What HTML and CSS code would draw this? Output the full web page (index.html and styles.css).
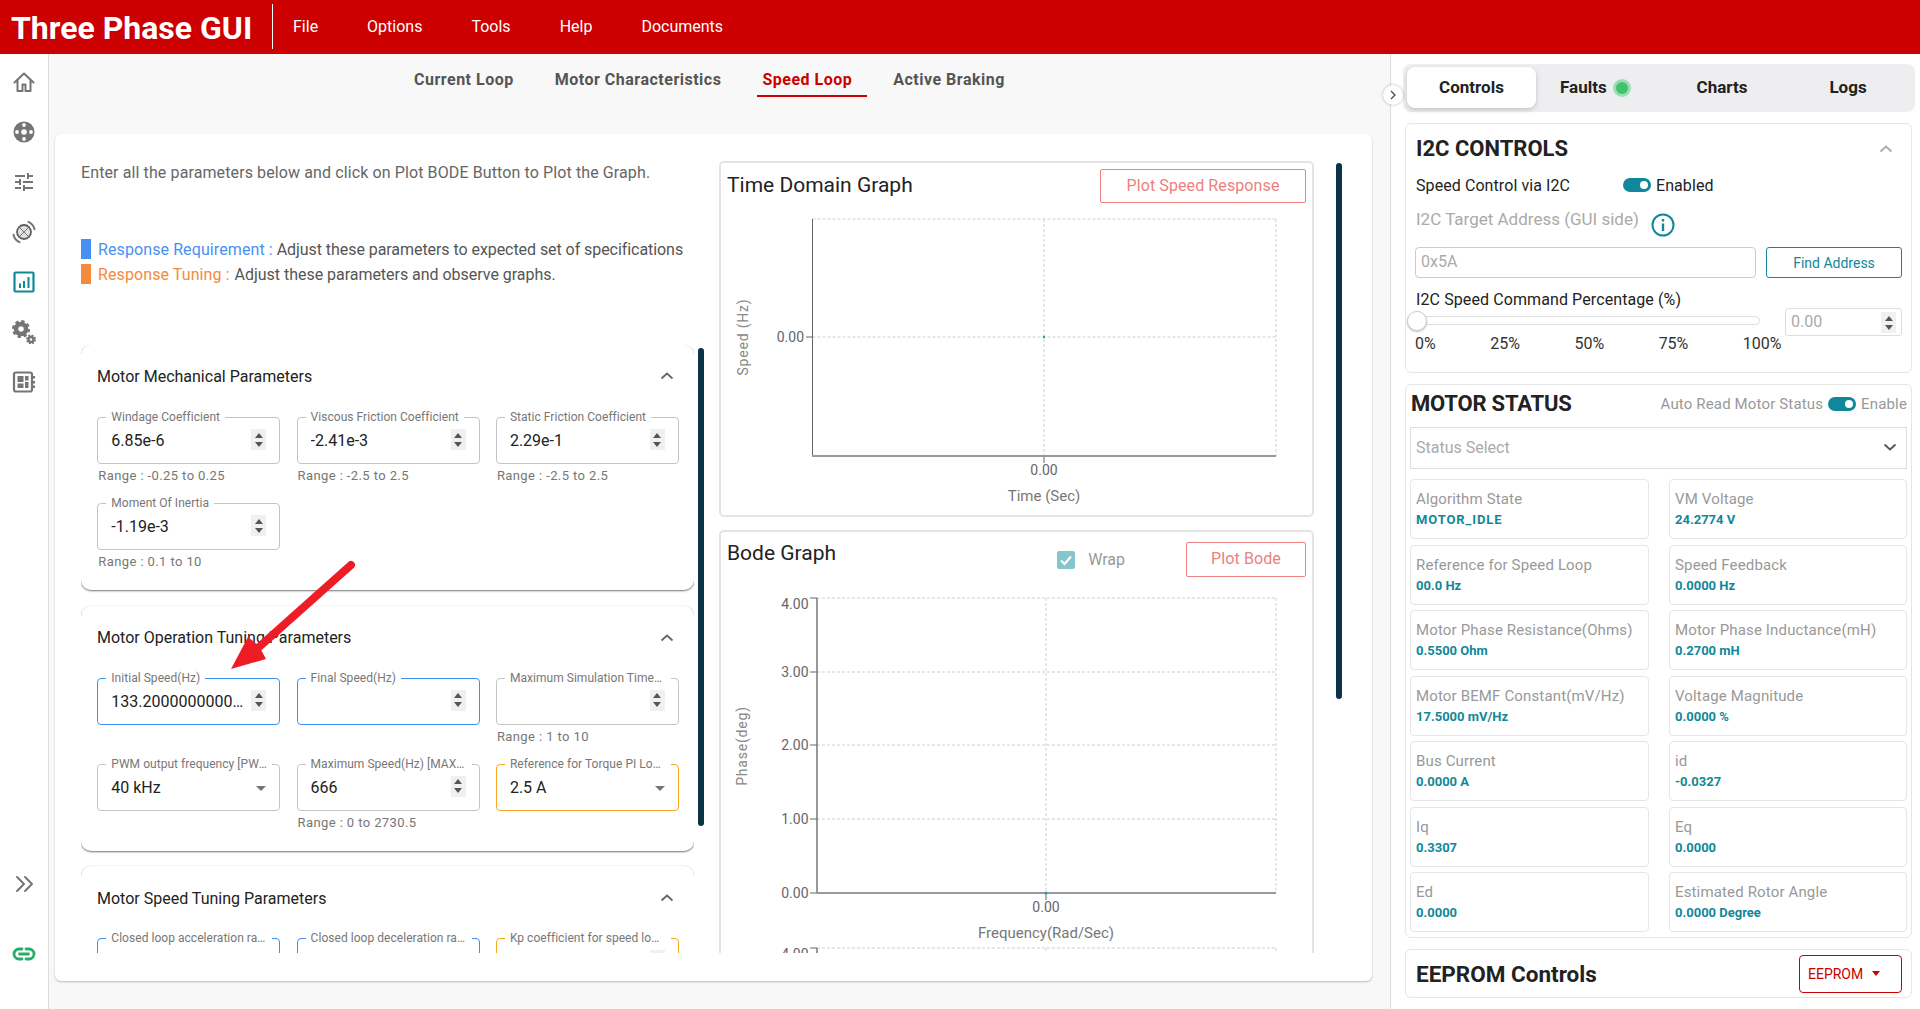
FILE: index.html
```html
<!DOCTYPE html>
<html lang="en">
<head>
<meta charset="utf-8">
<title>Three Phase GUI</title>
<link rel="stylesheet" href="styles.css">
</head>
<body>
<header class="topbar">
  <div class="brand">Three Phase GUI</div>
  <div class="brand-rule"></div>
  <nav class="menu">
    <span>File</span><span>Options</span><span>Tools</span><span>Help</span><span>Documents</span>
  </nav>
</header>
<div class="shell">
  <aside class="rail">
    <div class="rail-top">
      <svg class="rail-icon" viewBox="0 0 24 24"><path class="ln" d="M2.500 12.500 12 3.500l9.500 9M5.500 10.500V21h5v-6.500h3V21h5V10.500"/></svg>
      <svg class="rail-icon" viewBox="0 0 24 24"><circle class="fl" cx="12" cy="12" r="10.500"/><circle class="hole" cx="12" cy="12" r="2.800"/><circle class="hole" cx="12" cy="5" r="1.900"/><circle class="hole" cx="12" cy="19" r="1.900"/><circle class="hole" cx="5" cy="12" r="1.900"/><circle class="hole" cx="19" cy="12" r="1.900"/></svg>
      <svg class="rail-icon" viewBox="0 0 24 24"><path class="fl" d="M3 17v2h6v-2H3zM3 5v2h10V5H3zm10 16v-2h8v-2h-8v-2h-2v6h2zM7 9v2H3v2h4v2h2V9H7zm14 4v-2H11v2h10zm-6-4h2V7h4V5h-4V3h-2v6z"/></svg>
      <svg class="rail-icon" viewBox="0 0 24 24"><circle cx="12" cy="12" r="7" fill="#e2e2e2" stroke="#616161" stroke-width="1.800"/><path class="ln thin" d="M7 7l10 10M17 7 7 17"/><path class="ln" d="M16.500 1.800a11 11 0 0 1 6 7.500M7.500 22.200a11 11 0 0 1-6-7.500"/></svg>
      <svg class="rail-icon" viewBox="0 0 24 24"><rect x="2.500" y="2.500" width="19" height="19" rx="1" fill="none" stroke="#118899" stroke-width="2.200"/><path fill="#118899" d="M7 13.500h2V18H7zM11 11h2v7h-2zM15.500 7h2v11h-2z"/></svg>
      <svg class="rail-icon" viewBox="0 0 24 24"><circle cx="9" cy="9" r="5" fill="none" stroke="#757575" stroke-width="4.500"/><circle cx="9" cy="9" r="7.500" fill="none" stroke="#757575" stroke-width="3" stroke-dasharray="3.200 2.700"/><circle cx="19" cy="19.500" r="2.500" fill="none" stroke="#757575" stroke-width="2.500"/><circle cx="19" cy="19.500" r="4.200" fill="none" stroke="#757575" stroke-width="1.600" stroke-dasharray="1.900 1.400"/></svg>
      <svg class="rail-icon" viewBox="0 0 24 24"><rect x="2" y="2.500" width="18" height="19" rx="2" fill="none" stroke="#757575" stroke-width="2.200"/><path class="fl" d="M5.500 6h6v6h-6zM5.500 13.500h6V18h-6zM13 6h3.500v4.500H13zM13 12h3.500v6H13zM21 6h2v2.500h-2zM21 11h2v2.500h-2zM21 15.500h2V18h-2z"/></svg>
    </div>
    <div class="rail-bottom">
      <svg class="rail-icon" viewBox="0 0 24 24"><path class="ln" d="M5 5l7 7-7 7M13 5l7 7-7 7"/></svg>
      <svg class="rail-icon" viewBox="0 0 24 24"><path fill="none" stroke="#27ae6b" stroke-width="2.800" stroke-linecap="round" d="M10 7H7a5 5 0 0 0 0 10h3M14 7h3a5 5 0 0 1 0 10h-3M7.500 12h9"/></svg>
    </div>
  </aside>

  <main class="workspace">
    <nav class="subtabs">
      <span class="subtab">Current Loop</span>
      <span class="subtab">Motor Characteristics</span>
      <span class="subtab is-active">Speed Loop</span>
      <span class="subtab">Active Braking</span>
    </nav>
    <section class="sheet">
      <div class="params">
        <p class="intro">Enter all the parameters below and click on Plot BODE Button to Plot the Graph.</p>
        <div class="key key-first"><i class="swatch swatch-blue"></i><span class="key-blue">Response Requirement :</span>&nbsp;Adjust these parameters to expected set of specifications</div>
        <div class="key"><i class="swatch swatch-orange"></i><span class="key-orange">Response Tuning :</span>&nbsp;Adjust these parameters and observe graphs.</div>
        <div class="params-scroll">
          <article class="acc">
            <div class="acc-head"><span>Motor Mechanical Parameters</span><svg class="chev" viewBox="0 0 14 8"><path d="M1.500 6.500 7 1.500l5.500 5"/></svg></div>
            <div class="fields">
              <div class="cell"><div class="fld"><span class="fld-label">Windage Coefficient</span><span class="fld-value">6.85e-6</span><span class="spin"><i class="up"></i><i class="down"></i></span></div><div class="range">Range : -0.25 to 0.25</div></div>
              <div class="cell"><div class="fld"><span class="fld-label">Viscous Friction Coefficient</span><span class="fld-value">-2.41e-3</span><span class="spin"><i class="up"></i><i class="down"></i></span></div><div class="range">Range : -2.5 to 2.5</div></div>
              <div class="cell"><div class="fld"><span class="fld-label">Static Friction Coefficient</span><span class="fld-value">2.29e-1</span><span class="spin"><i class="up"></i><i class="down"></i></span></div><div class="range">Range : -2.5 to 2.5</div></div>
              <div class="cell"><div class="fld"><span class="fld-label">Moment Of Inertia</span><span class="fld-value">-1.19e-3</span><span class="spin"><i class="up"></i><i class="down"></i></span></div><div class="range">Range : 0.1 to 10</div></div>
            </div>
          </article>
          <article class="acc">
            <div class="acc-head"><span>Motor Operation Tuning Parameters</span><svg class="chev" viewBox="0 0 14 8"><path d="M1.500 6.500 7 1.500l5.500 5"/></svg></div>
            <div class="fields">
              <div class="cell"><div class="fld fld-blue"><span class="fld-label">Initial Speed(Hz)</span><span class="fld-value">133.2000000000000</span><span class="spin"><i class="up"></i><i class="down"></i></span></div></div>
              <div class="cell"><div class="fld fld-blue"><span class="fld-label">Final Speed(Hz)</span><span class="fld-value"></span><span class="spin"><i class="up"></i><i class="down"></i></span></div></div>
              <div class="cell"><div class="fld"><span class="fld-label">Maximum Simulation Time(Sec)</span><span class="fld-value"></span><span class="spin"><i class="up"></i><i class="down"></i></span></div><div class="range">Range : 1 to 10</div></div>
              <div class="cell"><div class="fld"><span class="fld-label">PWM output frequency [PWM_FREQ]</span><span class="fld-value">40 kHz</span><i class="caret"></i></div></div>
              <div class="cell"><div class="fld"><span class="fld-label">Maximum Speed(Hz) [MAX_SPEED]</span><span class="fld-value">666</span><span class="spin"><i class="up"></i><i class="down"></i></span></div><div class="range">Range : 0 to 2730.5</div></div>
              <div class="cell"><div class="fld fld-orange"><span class="fld-label">Reference for Torque PI Loop Current</span><span class="fld-value">2.5 A</span><i class="caret"></i></div></div>
            </div>
          </article>
          <article class="acc">
            <div class="acc-head"><span>Motor Speed Tuning Parameters</span><svg class="chev" viewBox="0 0 14 8"><path d="M1.500 6.500 7 1.500l5.500 5"/></svg></div>
            <div class="fields">
              <div class="cell"><div class="fld fld-blue"><span class="fld-label">Closed loop acceleration rate (Hz/s)</span></div></div>
              <div class="cell"><div class="fld fld-blue"><span class="fld-label">Closed loop deceleration rate (Hz/s)</span></div></div>
              <div class="cell"><div class="fld fld-orange"><span class="fld-label">Kp coefficient for speed loop gain</span><span class="spin"><i class="up"></i><i class="down"></i></span></div></div>
            </div>
          </article>
        </div>
        <div class="thumb thumb-left"></div>
        <svg class="callout" viewBox="0 0 135 115"><path d="M126 5 34 87" class="callout-line"/><path class="callout-head" d="M6 109 23 77l11 9 7 13z"/></svg>
      </div>

      <div class="graphs">
        <div class="graphs-scroll">
          <article class="graph">
            <div class="graph-head">
              <h2 class="graph-title graph-title-time">Time Domain Graph</h2>
              <button class="plot-btn plot-btn-wide">Plot Speed Response</button>
            </div>
            <svg class="plot plot-time" viewBox="0 0 589 312">
              <path class="grid" d="M90.500 16H554M322 16v237M554 16v237M90.500 134H554"/>
              <path class="axis-dark" d="M90.500 16v237M84 134h6.500M322 253v7"/>
              <path class="axis-thick" d="M90 253h464"/>
              <circle class="pt" cx="322" cy="134" r="1.200"/>
              <text class="tick" x="82" y="139" text-anchor="end">0.00</text>
              <text class="tick" x="322" y="272" text-anchor="middle">0.00</text>
              <text class="axis-label" x="322" y="298" text-anchor="middle">Time (Sec)</text>
              <text class="axis-label-v" transform="translate(26 134) rotate(-90)" text-anchor="middle">Speed (Hz)</text>
            </svg>
          </article>
          <article class="graph graph-bode">
            <div class="graph-head graph-head-bode">
              <h2 class="graph-title graph-title-bode">Bode Graph</h2>
              <label class="wrap-opt"><i class="check"><svg viewBox="0 0 18 18"><path d="M4 9.500 7.500 13 14 5.500"/></svg></i>Wrap</label>
              <button class="plot-btn plot-btn-small">Plot Bode</button>
            </div>
            <svg class="plot plot-bode" viewBox="0 0 589 400">
              <path class="grid" d="M95 21H554M95 95H554M95 168H554M95 242H554M324 21V316M554 21V316M95 371H554M324 371v30M554 371v30"/>
              <path class="axis-thick" d="M95 21V316M95 316H554M95 371v30"/>
              <path class="axis-dark" d="M88 21h7M88 95h7M88 168h7M88 242h7M88 316h7M324 316v7M88 371h7"/>
              <circle class="pt" cx="324" cy="316" r="1.500"/>
              <text class="tick" x="86.500" y="32" text-anchor="end">4.00</text>
              <text class="tick" x="86.500" y="100" text-anchor="end">3.00</text>
              <text class="tick" x="86.500" y="173" text-anchor="end">2.00</text>
              <text class="tick" x="86.500" y="247" text-anchor="end">1.00</text>
              <text class="tick" x="86.500" y="321" text-anchor="end">0.00</text>
              <text class="tick" x="324" y="335" text-anchor="middle">0.00</text>
              <text class="axis-label" x="324" y="361" text-anchor="middle">Frequency(Rad/Sec)</text>
              <text class="tick" x="86.500" y="382" text-anchor="end">4.00</text>
              <text class="axis-label-v" transform="translate(25 169) rotate(-90)" text-anchor="middle">Phase(deg)</text>
            </svg>
          </article>
        </div>
        <div class="thumb thumb-right"></div>
      </div>
    </section>
  </main>

  <aside class="side">
    <button class="collapse"><svg viewBox="0 0 10 14"><path d="M2.500 2 7.500 7l-5 5"/></svg></button>
    <div class="side-tabs">
      <span class="side-tab is-on">Controls</span>
      <span class="side-tab">Faults<i class="led"></i></span>
      <span class="side-tab">Charts</span>
      <span class="side-tab">Logs</span>
    </div>

    <section class="panel panel-i2c">
      <div class="panel-head"><h2>I2C CONTROLS</h2><svg class="chev chev-light" viewBox="0 0 14 8"><path d="M1.500 6.500 7 1.500l5.500 5"/></svg></div>
      <div class="i2c-speed"><span class="i2c-speed-label">Speed Control via I2C</span><i class="toggle"></i><span class="toggle-text">Enabled</span></div>
      <div class="i2c-target"><span>I2C Target Address (GUI side)</span><svg class="info" viewBox="0 0 24 24"><circle cx="12" cy="12" r="10.500"/><path d="M12 10.500V18M12 6v2.500"/></svg></div>
      <div class="i2c-addr"><span class="addr-input">0x5A</span><button class="find-btn">Find Address</button></div>
      <div class="i2c-pct">I2C Speed Command Percentage (%)</div>
      <div class="i2c-slider">
        <div class="slider">
          <div class="slider-track"><i class="slider-thumb"></i></div>
          <div class="slider-marks"><span>0%</span><span>25%</span><span>50%</span><span>75%</span><span>100%</span></div>
        </div>
        <div class="pct-input"><span>0.00</span><span class="spin spin-sm"><i class="up"></i><i class="down"></i></span></div>
      </div>
    </section>

    <section class="panel panel-motor">
      <div class="motor-head"><h2>MOTOR STATUS</h2><div class="motor-auto"><span>Auto Read Motor Status</span><i class="toggle"></i><span>Enable</span></div></div>
      <div class="status-select"><span>Status Select</span><svg class="chev chev-down" viewBox="0 0 14 8"><path d="M1.500 1.500 7 6.500l5.500-5"/></svg></div>
      <div class="status-grid">
        <div class="stat"><div class="stat-name">Algorithm State</div><div class="stat-val stat-val-caps">MOTOR_IDLE</div></div>
        <div class="stat"><div class="stat-name">VM Voltage</div><div class="stat-val">24.2774 V</div></div>
        <div class="stat"><div class="stat-name">Reference for Speed Loop</div><div class="stat-val">00.0 Hz</div></div>
        <div class="stat"><div class="stat-name">Speed Feedback</div><div class="stat-val">0.0000 Hz</div></div>
        <div class="stat"><div class="stat-name">Motor Phase Resistance(Ohms)</div><div class="stat-val">0.5500 Ohm</div></div>
        <div class="stat"><div class="stat-name">Motor Phase Inductance(mH)</div><div class="stat-val">0.2700 mH</div></div>
        <div class="stat"><div class="stat-name">Motor BEMF Constant(mV/Hz)</div><div class="stat-val">17.5000 mV/Hz</div></div>
        <div class="stat"><div class="stat-name">Voltage Magnitude</div><div class="stat-val">0.0000 %</div></div>
        <div class="stat"><div class="stat-name">Bus Current</div><div class="stat-val">0.0000 A</div></div>
        <div class="stat"><div class="stat-name">id</div><div class="stat-val">-0.0327</div></div>
        <div class="stat"><div class="stat-name">Iq</div><div class="stat-val">0.3307</div></div>
        <div class="stat"><div class="stat-name">Eq</div><div class="stat-val">0.0000</div></div>
        <div class="stat"><div class="stat-name">Ed</div><div class="stat-val">0.0000</div></div>
        <div class="stat"><div class="stat-name">Estimated Rotor Angle</div><div class="stat-val">0.0000 Degree</div></div>
      </div>
    </section>

    <section class="panel panel-eeprom">
      <h2>EEPROM Controls</h2>
      <button class="eeprom-btn">EEPROM<i class="eeprom-caret"></i></button>
    </section>
  </aside>
</div>
</body>
</html>
```
FILE: styles.css
```css
* { box-sizing: border-box; }
html, body { margin: 0; height: 1009px; overflow: hidden; }
body { font-family: Roboto, "Liberation Sans", sans-serif; font-size: 16px; color: #222; background: #fff; }
h2, p { margin: 0; }
button { font-family: inherit; background: #fff; cursor: pointer; }

/* top bar */
.topbar { height: 54px; background: #cc0000; color: #fff; display: flex; align-items: center; }
.brand { margin-left: 11px; width: 243px; padding-top: 1px; font-size: 32px; font-weight: 700; line-height: 54px; white-space: nowrap; }
.brand-rule { width: 1px; height: 45px; margin: -1px 0 0 18px; background: #fff; }
.menu { display: flex; gap: 49px; margin: -1px 0 0 20px; font-size: 16px; }

.shell { display: flex; height: 955px; }

/* left rail */
.rail { width: 49px; flex: none; background: #fff; border-right: 1px solid #dcdcdc; display: flex; flex-direction: column; justify-content: space-between; padding: 16px 0 43px; }
.rail-top, .rail-bottom { display: flex; flex-direction: column; align-items: center; }
.rail-top { gap: 26px; margin-right: 1px; }
.rail-bottom { gap: 46px; margin-right: 1px; }
.rail-icon { width: 24px; height: 24px; display: block; }
.ln { fill: none; stroke: #757575; stroke-width: 2; stroke-linecap: round; stroke-linejoin: round; }
.ln.thin { stroke-width: 1; }
.fl { fill: #757575; }
.hole { fill: #fff; }

/* workspace */
.workspace { width: 1342px; flex: none; background: #f8f8f8; }
.subtabs { height: 80px; display: flex; gap: 31px; padding: 15px 0 0 360px; }
.subtab { height: 28px; padding: 0 5px; line-height: 22px; font-weight: 700; letter-spacing: .5px; color: #555; white-space: nowrap; }
.subtab.is-active { color: #cc0000; border-bottom: 2px solid #cc0000; padding-right: 15px; margin-right: -10px; }

.sheet { margin-left: 6px; width: 1317px; height: 847px; background: #fff; border-radius: 6px; box-shadow: 0 1px 2px rgba(0,0,0,.25); display: flex; padding: 28px 0 0 26px; }

.params { width: 638px; flex: none; position: relative; padding-top: 1px; }
.intro { line-height: 20px; letter-spacing: .11px; color: #666; }
.key { display: flex; align-items: center; height: 20px; margin-top: 5px; color: #555; white-space: nowrap; letter-spacing: -.03px; }
.key-first { margin-top: 56px; letter-spacing: -.06px; }
.swatch { width: 10px; height: 20px; margin-right: 7px; flex: none; }
.swatch-blue { background: #4a8ff5; }
.swatch-orange { background: #f58a3c; }
.key-blue { color: #4a8ff5; letter-spacing: .1px; }
.key-orange { color: #f58a3c; letter-spacing: .1px; padding-right: 1px; }

.params-scroll { margin-top: 61px; height: 608px; width: 613px; overflow: hidden; padding-bottom: 3px; display: flex; flex-direction: column; gap: 15.500px; }
.acc { flex: none; width: 613px; height: 245px; border-radius: 10px; background: #fff; padding: 22px 16px 0; box-shadow: 0 1px 2px rgba(0,0,0,.55), 0 -1px 1px rgba(0,0,0,.02); }
.acc-head { display: flex; justify-content: space-between; align-items: center; height: 20px; margin-bottom: 30px; color: #222; }
.acc:first-child .acc-head { margin-top: -1px; margin-bottom: 31px; }
.chev { width: 14px; height: 8px; margin-right: 4px; fill: none; stroke: #666; stroke-width: 1.800; }
.fields { display: grid; grid-template-columns: repeat(3, 183px); column-gap: 16.300px; row-gap: 20px; margin-left: .300px; }
.cell { min-height: 66px; }
.fld { position: relative; height: 47px; border: 1px solid #c4c4c4; border-radius: 4px; display: flex; align-items: center; padding: 0 13px; }
.fld-blue { border-color: #3d8ff5; }
.fld-orange { border-color: #f9a825; }
.fld-label { position: absolute; top: -8px; left: 8px; max-width: 166px; padding: 0 5px; background: #fff; font-size: 12px; line-height: 14px; letter-spacing: .04px; color: #777; white-space: nowrap; overflow: hidden; text-overflow: ellipsis; }
.fld-value { width: 136px; color: #222; white-space: nowrap; overflow: hidden; text-overflow: ellipsis; }
.spin { position: absolute; top: 11px; right: 13px; width: 15px; height: 21px; background: #f0f0f0; display: flex; flex-direction: column; align-items: center; justify-content: center; gap: 4px; }
.spin .up { border: 4px solid transparent; border-top: 0; border-bottom: 5px solid #555; }
.spin .down { border: 4px solid transparent; border-bottom: 0; border-top: 5px solid #555; }
.caret { position: absolute; right: 13px; top: 21px; border: 5px solid transparent; border-bottom: 0; border-top: 5px solid #757575; }
.range { margin: 5px 0 0 1px; font-size: 13px; line-height: 14px; letter-spacing: .4px; color: #777; }

.thumb { position: absolute; width: 6px; background: #0b3345; border-radius: 3px; }
.thumb-left { left: 617px; top: 186px; height: 478px; }
.thumb-right { left: 617px; top: 2px; height: 536px; }

.callout { position: absolute; left: 144px; top: 398px; width: 135px; height: 115px; }
.callout-line { fill: none; stroke: #ee1c25; stroke-width: 8; stroke-linecap: round; }
.callout-head { fill: #ee1c25; }

/* graphs */
.graphs { width: 623px; flex: none; position: relative; margin-top: -1px; }
.graphs-scroll { width: 595px; height: 792px; overflow: hidden; display: flex; flex-direction: column; gap: 13px; }
.graph { flex: none; width: 595px; height: 356px; border: 2px solid #e4e4e4; border-radius: 5px; background: #fff; }
.graph-bode { height: 541px; }
.graph-head { display: flex; align-items: flex-start; padding: 6px 6px 0; }
.graph-head-bode { padding-top: 10px; }
.graph-title { flex: 1; font-size: 21px; font-weight: 400; line-height: 24px; color: #222; }
.graph-title-time { margin-top: 4px; }
.graph-title-bode { margin-top: -1px; }
.plot-btn { height: 34px; border: 1px solid #ee8080; border-radius: 2px; color: #ee8080; font-size: 16px; letter-spacing: .1px; padding: 0 0 2px; }
.plot-btn-wide { width: 206px; }
.plot-btn-small { width: 120px; height: 35px; }
.wrap-opt { display: flex; align-items: center; height: 35px; margin-right: 61px; color: #999; }
.check { width: 18px; height: 18px; margin-right: 13px; border-radius: 2px; background: #85c6cc; display: block; }
.check svg { display: block; width: 18px; height: 18px; fill: none; stroke: #fff; stroke-width: 2; }
.plot { display: block; width: 589px; margin-left: 1px; }
.plot-time { height: 312px; }
.plot-bode { height: 400px; }
.grid { fill: none; stroke: #cfcfcf; stroke-dasharray: 3 2; }
.axis-dark { fill: none; stroke: #666; stroke-width: 1; }
.axis-thick { fill: none; stroke: #999; stroke-width: 2; }
.pt { fill: #1aa0b0; }
.tick { font-family: Roboto, sans-serif; font-size: 14px; fill: #666; }
.axis-label { font-family: Roboto, sans-serif; font-size: 15px; fill: #777; }
.axis-label-v { font-family: Roboto, sans-serif; font-size: 14px; letter-spacing: .8px; fill: #888; }

/* right side */
.side { position: relative; flex: 1; background: #fff; border-left: 1px solid #dcdcdc; padding: 10px 5px 0 11px; margin-left: -1px; }
.collapse { position: absolute; left: -8px; top: 31px; width: 20px; height: 20px; border: 0; padding: 0; border-radius: 50%; background: #fff; box-shadow: 0 0 3px rgba(0,0,0,.3); display: flex; align-items: center; justify-content: center; }
.collapse svg { width: 8px; height: 12px; fill: none; stroke: #444; stroke-width: 1.500; }
.side-tabs { height: 48px; background: #eeeef0; border-radius: 8px; display: grid; grid-template-columns: repeat(4, 126px); padding: 3px 4px 4px; margin-left: 1px; }
.side-tab { display: flex; align-items: center; justify-content: center; padding-bottom: 1px; font-size: 17px; font-weight: 700; color: #222; }
.side-tab.is-on { background: #fff; border-radius: 8px; width: 129px; box-shadow: 0 2px 5px rgba(0,0,0,.18); }
.led { width: 12px; height: 12px; margin: 1px 3.700px 0 9.700px; border-radius: 50%; background: #3ec46d; box-shadow: 0 0 0 3px rgba(62,196,109,.45); }

.panel { margin: 11px 3px 0 3px; border: 1px solid #e6e6e6; border-radius: 6px; background: #fff; }
.panel h2 { font-size: 22px; font-weight: 700; line-height: 24px; color: #222; white-space: nowrap; }

.panel-i2c { height: 250px; padding: 13px 9px 0 10px; }
.panel-head { display: flex; justify-content: space-between; align-items: center; height: 24px; }
.chev-light { stroke: #aaa; margin-right: 9px; }
.i2c-speed { display: flex; align-items: center; height: 20px; margin-top: 14px; letter-spacing: .08px; }
.i2c-speed-label { width: 207px; }
.toggle { position: relative; display: block; width: 28px; height: 14px; border-radius: 7px; background: #118899; flex: none; }
.toggle::after { content: ""; position: absolute; right: 3px; top: 3px; width: 8px; height: 8px; border-radius: 50%; background: #fff; }
.toggle-text { margin-left: 5px; }
.i2c-target { display: flex; align-items: flex-start; height: 28px; margin-top: 14px; font-size: 17px; line-height: 20px; color: #aaa; }
.info { width: 24px; height: 24px; margin: 4px 0 0 12px; fill: none; stroke: #118899; stroke-width: 2; }
.info path { stroke-width: 2.400; }
.i2c-addr { display: flex; gap: 10px; height: 31px; margin: 10px 0 0 -1px; }
.addr-input { width: 341px; border: 1px solid #ccc; border-radius: 4px; padding-left: 5px; line-height: 27px; color: #aaa; }
.find-btn { width: 136px; border: 1px solid #118899; border-radius: 3px; color: #118899; font-size: 14px; padding: 0; }
.i2c-pct { height: 20px; line-height: 20px; margin-top: 12px; letter-spacing: .1px; }
.i2c-slider { display: flex; gap: 25px; margin: -2px 0 0 -9px; }
.slider { width: 353px; flex: none; padding-top: 8px; }
.slider-track { position: relative; height: 9px; border: 1px solid #ddd; border-radius: 5px; background: #fff; }
.slider-thumb { position: absolute; left: -1px; top: -6px; width: 20px; height: 20px; border-radius: 50%; background: #fff; border: 1px solid #ccc; box-shadow: 0 1px 2px rgba(0,0,0,.25); }
.slider-marks { display: flex; gap: 54.500px; margin: 11px 0 0 8px; font-size: 16px; line-height: 16px; color: #333; white-space: nowrap; }
.pct-input { position: relative; width: 117px; height: 28px; border: 1px solid #ddd; border-radius: 3px; padding-left: 5px; line-height: 26px; color: #aaa; }
.spin-sm { top: 3px; right: 5px; }

.panel-motor { height: 554px; padding: 7px 4px 0 4px; }
.motor-head { display: flex; justify-content: space-between; align-items: center; height: 24px; padding-left: 1px; }
.motor-head h2 { letter-spacing: -.2px; }
.motor-auto { display: flex; align-items: center; gap: 5px; margin-top: -1px; font-size: 15px; letter-spacing: .15px; color: #999; }
.status-select { height: 42px; margin-top: 11px; border: 1px solid #ddd; display: flex; align-items: center; justify-content: space-between; padding: 0 0 2px 5px; color: #aaa; }
.chev-down { stroke: #555; margin-right: 9px; }
.status-grid { display: grid; grid-template-columns: 239px 238px; column-gap: 20px; row-gap: 5.500px; margin-top: 10px; }
.stat { height: 60px; border: 1px solid #e6e6e6; border-radius: 4px; padding: 10px 0 0 5px; }
.stat-name { font-size: 15px; line-height: 18px; letter-spacing: .15px; color: #999; white-space: nowrap; }
.stat-val { margin-top: 4px; font-size: 13px; font-weight: 700; line-height: 16px; color: #118899; white-space: nowrap; }
.stat-val-caps { letter-spacing: .9px; }

.panel-eeprom { height: 49px; display: flex; justify-content: space-between; align-items: center; padding: 0 9px 0 10px; }
.panel-eeprom h2 { font-size: 22.500px; }
.eeprom-btn { width: 103px; height: 38px; border: 1px solid #cc0000; border-radius: 4px; color: #cc0000; font-size: 14px; display: flex; align-items: center; padding: 0 0 0 8px; }
.eeprom-caret { margin-left: 9px; border: 4px solid transparent; border-bottom: 0; border-top: 5px solid #cc0000; }
```
